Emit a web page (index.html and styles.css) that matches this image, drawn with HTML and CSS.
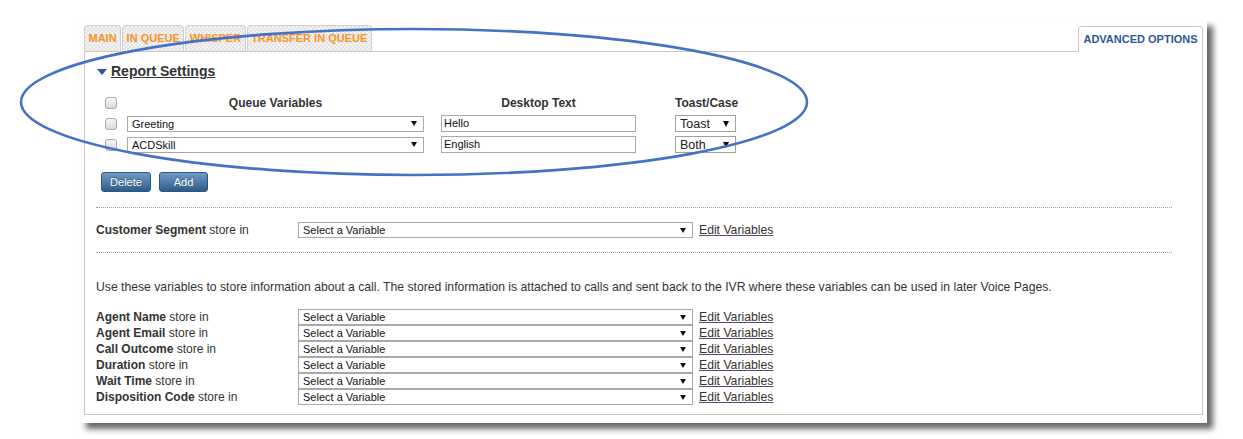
FILE: index.html
```html
<!DOCTYPE html>
<html>
<head>
<meta charset="utf-8">
<link rel="stylesheet" href="styles.css">
</head>
<body>
<div class="shot">
  <div class="tabs">
    <div class="tab">MAIN</div>
    <div class="tab">IN QUEUE</div>
    <div class="tab">WHISPER</div>
    <div class="tab">TRANSFER IN QUEUE</div>
    <div class="spacer"></div>
    <div class="tab-active">ADVANCED OPTIONS</div>
  </div>
  <div class="panel">
    <div class="heading"><span class="tri"></span><span class="heading-text">Report Settings</span></div>
    <div class="rtable">
      <span class="cb"></span>
      <div class="th w-var">Queue Variables</div>
      <div class="th w-txt">Desktop Text</div>
      <div class="th w-tc">Toast/Case</div>

      <span class="cb"></span>
      <div class="sel w-var"><span class="sel-text">Greeting</span><span class="arrow"></span></div>
      <div class="inp w-txt">Hello</div>
      <div class="sel2 w-tc"><span>Toast</span><span class="arrow2"></span></div>

      <span class="cb"></span>
      <div class="sel w-var"><span class="sel-text">ACDSkill</span><span class="arrow"></span></div>
      <div class="inp w-txt">English</div>
      <div class="sel2 w-tc"><span>Both</span><span class="arrow2"></span></div>
    </div>
    <div class="buttons">
      <div class="btn btn-del">Delete</div>
      <div class="btn btn-add">Add</div>
    </div>
    <div class="dots dots1"></div>
    <div class="row row-cs">
      <div class="label"><b>Customer Segment</b> store in</div>
      <div class="sel w-store"><span class="sel-text">Select a Variable</span><span class="arrow"></span></div>
      <a class="edit">Edit Variables</a>
    </div>
    <div class="dots dots2"></div>
    <p class="info">Use these variables to store information about a call. The stored information is attached to calls and sent back to the IVR where these variables can be used in later Voice Pages.</p>
    <div class="store">
      <div class="row">
        <div class="label"><b>Agent Name</b> store in</div>
        <div class="sel w-store"><span class="sel-text">Select a Variable</span><span class="arrow"></span></div>
        <a class="edit">Edit Variables</a>
      </div>
      <div class="row">
        <div class="label"><b>Agent Email</b> store in</div>
        <div class="sel w-store"><span class="sel-text">Select a Variable</span><span class="arrow"></span></div>
        <a class="edit">Edit Variables</a>
      </div>
      <div class="row">
        <div class="label"><b>Call Outcome</b> store in</div>
        <div class="sel w-store"><span class="sel-text">Select a Variable</span><span class="arrow"></span></div>
        <a class="edit">Edit Variables</a>
      </div>
      <div class="row">
        <div class="label"><b>Duration</b> store in</div>
        <div class="sel w-store"><span class="sel-text">Select a Variable</span><span class="arrow"></span></div>
        <a class="edit">Edit Variables</a>
      </div>
      <div class="row">
        <div class="label"><b>Wait Time</b> store in</div>
        <div class="sel w-store"><span class="sel-text">Select a Variable</span><span class="arrow"></span></div>
        <a class="edit">Edit Variables</a>
      </div>
      <div class="row">
        <div class="label"><b>Disposition Code</b> store in</div>
        <div class="sel w-store"><span class="sel-text">Select a Variable</span><span class="arrow"></span></div>
        <a class="edit">Edit Variables</a>
      </div>
    </div>
  </div>
</div>
<svg class="annot" width="1243" height="439" viewBox="0 0 1243 439">
  <ellipse cx="414" cy="102" rx="393" ry="73" fill="none" stroke="#4472c4" stroke-width="2.6"/>
</svg>
</body>
</html>
```
FILE: styles.css
```css
html, body {
  margin: 0;
  padding: 0;
  background: #fff;
}
body {
  font-family: "Liberation Sans", Arial, sans-serif;
  color: #333;
  font-size: 12px;
  width: 1243px;
  height: 439px;
  overflow: hidden;
  position: relative;
}
.shot {
  margin: 20px 0 0 80px;
  width: 1127px;
  height: 403px;
  box-sizing: border-box;
  padding: 5px 4px 0 4px;
  background: #fff;
  box-shadow: 6px 6px 6px rgba(0, 0, 0, 0.6);
}
.tabs {
  display: flex;
  align-items: flex-end;
  height: 26px;
}
.tab {
  height: 26px;
  box-sizing: border-box;
  padding: 0 3.5px;
  margin-right: 1px;
  border: 1px solid #cfcfcf;
  border-bottom: none;
  border-radius: 4px 4px 0 0;
  background: repeating-conic-gradient(#e3e3e3 0 25%, #f3f3f3 0 50%) 0 0 / 4px 4px;
  color: #f7941d;
  font-weight: bold;
  font-size: 11px;
  line-height: 25px;
}
.spacer {
  flex: 1;
}
.tab-active {
  position: relative;
  z-index: 1;
  height: 26px;
  margin-bottom: -1px;
  box-sizing: border-box;
  width: 125px;
  text-align: center;
  border: 1px solid #cdc8b6;
  border-bottom: 1px solid #fff;
  border-radius: 4px 4px 0 0;
  background: #fff;
  color: #2b5797;
  font-weight: bold;
  font-size: 11px;
  line-height: 24px;
}
.panel {
  height: 364px;
  box-sizing: border-box;
  border: 1px solid #cdc8b6;
  padding: 11px 30px 0 11px;
}
.heading {
  height: 16px;
  display: flex;
  align-items: center;
  margin-left: 1px;
}
.tri {
  width: 0;
  height: 0;
  border-left: 5px solid transparent;
  border-right: 5px solid transparent;
  border-top: 6px solid #2b5797;
  margin-right: 4px;
  margin-top: 2px;
}
.heading-text {
  font-weight: bold;
  font-size: 14px;
  text-decoration: underline;
  color: #333;
}
.rtable {
  margin: 16px 0 0 9px;
  display: grid;
  grid-template-columns: 22px 314px 234px 61px;
  grid-template-rows: 16px 17px 17px;
  row-gap: 4px;
  align-items: center;
}
.cb {
  width: 12px;
  height: 12px;
  box-sizing: border-box;
  border: 1px solid #a9a9a9;
  border-radius: 3px;
  background: linear-gradient(#f6f6f6, #dadada);
}
.th {
  font-weight: bold;
  font-size: 12px;
  text-align: center;
  color: #333;
}
.w-var { width: 297px; }
.w-txt { width: 195px; }
.w-tc { width: 61px; }
.w-store { width: 395px; }
.sel {
  height: 16px;
  box-sizing: border-box;
  border: 1px solid #a9a9a9;
  background: #fff;
  display: flex;
  align-items: center;
  justify-content: space-between;
  padding: 0 6px 0 4px;
  font-size: 11px;
  color: #111;
}
.arrow {
  width: 0;
  height: 0;
  border-left: 3px solid transparent;
  border-right: 3px solid transparent;
  border-top: 5px solid #111;
}
.inp {
  height: 17px;
  box-sizing: border-box;
  border: 1px solid #a9a9a9;
  background: #fff;
  padding: 0 2px;
  font-size: 11px;
  line-height: 15px;
  color: #111;
}
.sel2 {
  height: 17px;
  box-sizing: border-box;
  border: 1px solid #a0a0a0;
  background: #fff;
  display: flex;
  align-items: center;
  justify-content: space-between;
  padding: 0 6px 0 4px;
  font-size: 12.5px;
  color: #222;
}
.arrow2 {
  width: 0;
  height: 0;
  border-left: 3.5px solid transparent;
  border-right: 3.5px solid transparent;
  border-top: 6px solid #111;
}
.buttons {
  margin: 19px 0 0 5px;
  display: flex;
  gap: 8px;
}
.btn {
  height: 20px;
  box-sizing: border-box;
  border: 1px solid #2a5684;
  border-radius: 3px;
  background: linear-gradient(#709bc7, #2e5b89);
  color: #fff;
  font-size: 11px;
  line-height: 18px;
  text-align: center;
  text-shadow: 0 -1px 0 rgba(0, 0, 0, 0.35);
}
.btn-del { width: 50px; }
.btn-add { width: 49px; }
.dots {
  height: 0;
  border-top: 1px dotted #a0a0a0;
}
.dots1 { margin-top: 15px; }
.dots2 { margin-top: 14px; }
.row {
  display: flex;
  align-items: center;
  height: 16px;
}
.row-cs {
  margin-top: 14px;
}
.label {
  width: 202px;
  font-size: 12px;
  color: #333;
}
.label b {
  color: #333;
}
.edit {
  margin-left: 6px;
  font-size: 12.2px;
  color: #333;
  text-decoration: underline;
  text-decoration-color: #5a4a7a;
}
.info {
  margin: 27px 0 0 0;
  font-size: 12.2px;
  line-height: 14px;
  color: #333;
}
.store {
  margin-top: 15px;
}
.annot {
  position: absolute;
  left: 0;
  top: 0;
  pointer-events: none;
}
```
